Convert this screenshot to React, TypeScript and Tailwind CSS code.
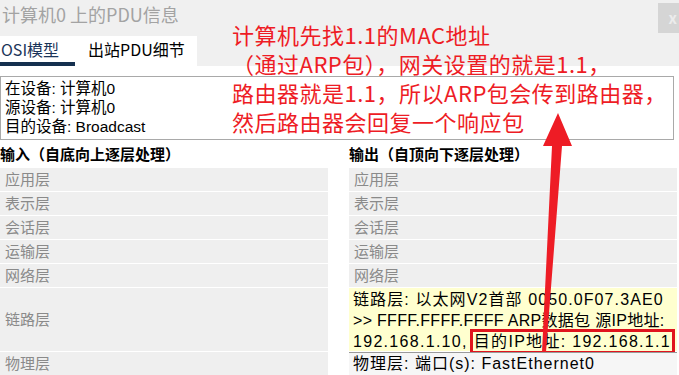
import React from 'react';

const cjk = { fontFamily: '"Noto Sans CJK SC", "Noto Sans", sans-serif' };
const mixed = { fontFamily: '"Liberation Sans", "Noto Sans CJK SC", sans-serif' };

const layers = ['应用层', '表示层', '会话层', '运输层', '网络层'];

const LayerRow: React.FC<{ label: string; tall?: boolean }> = ({ label, tall }) => (
  <div
    className={`flex items-center bg-[#efefef] pl-[5px] text-[15px] text-[#8a8a8a] ${tall ? 'h-[63px]' : 'h-[23px]'}`}
  >
    {label}
  </div>
);

const App: React.FC = () => {
  return (
    <div className="relative w-[679px] h-[375px] overflow-hidden bg-[#f0f0f0] flex flex-col" style={cjk}>
      {/* title bar */}
      <div className="h-[36px] flex justify-between items-start shrink-0">
        <div className="pl-[2px] pt-[2px] text-[18px] leading-[25px] text-[#a3a3a3]">计算机0 上的PDU信息</div>
        <div className="mt-[3px] w-[21px] h-[30px] bg-[#d5d5d5] flex items-center justify-end pr-[2px] text-[15px] font-bold text-[#ececec]">x</div>
      </div>

      {/* tabs */}
      <div className="h-[30px] flex shrink-0">
        <div className="w-[197px] bg-white flex items-end">
          <div className="w-[75px] h-full flex flex-col justify-between">
            <span className="pl-[1px] pt-[3px] text-[16px] leading-[21px] text-[#1b355a]">OSI模型</span>
            <div className="h-[4px] bg-[#15304f]" />
          </div>
          <span className="ml-[13px] self-start pt-[3px] text-[16px] leading-[21px] text-black">出站PDU细节</span>
        </div>
      </div>

      {/* content */}
      <div className="flex-1 bg-white flex flex-col">
        <div
          className="mt-[10px] mr-[5px] h-[64px] border border-[#a9a9a9] pl-[4px] pt-[2px] text-[15.5px] leading-[19px] text-black"
          style={mixed}
        >
          <div>在设备: 计算机0</div>
          <div>源设备: 计算机0</div>
          <div>目的设备: Broadcast</div>
        </div>

        <div className="mt-[1px] grid grid-cols-[328px_328px] gap-x-[21px]">
          <div className="flex flex-col gap-[1px]">
            <div className="h-[26px] flex items-center text-[15px] font-bold text-black">输入（自底向上逐层处理）</div>
            {layers.map((l) => (
              <LayerRow key={l} label={l} />
            ))}
            <LayerRow label="链路层" tall />
            <LayerRow label="物理层" />
          </div>

          <div className="flex flex-col gap-[1px]">
            <div className="h-[26px] flex items-center text-[15px] font-bold text-black">输出（自顶向下逐层处理）</div>
            {layers.map((l) => (
              <LayerRow key={l} label={l} />
            ))}
            <div
              className="h-[63px] bg-[#ffffcf] pl-[4px] pt-[1px] text-[16px] leading-[21px] text-black whitespace-nowrap"
              style={mixed}
            >
              <div className="tracking-[1.1px]">链路层: 以太网V2首部 0050.0F07.3AE0</div>
              <div className="tracking-[0.3px]">&gt;&gt; FFFF.FFFF.FFFF ARP数据包 源IP地址:</div>
              <div className="tracking-[1.3px]">
                192.168.1.10,
                <span className="ml-[2px] px-[1px] py-[1px] border-[3px] border-[#e0141e]">目的IP地址: 192.168.1.1</span>
              </div>
            </div>
            <div
              className="h-[23px] flex items-center bg-[#f6f6f6] border-t border-[#9a9a9a] pl-[4px] text-[16px] text-black tracking-[1px]"
              style={mixed}
            >
              物理层: 端口(s): FastEthernet0
            </div>
          </div>
        </div>
      </div>

      {/* annotation */}
      <div className="absolute left-[232px] top-[20px] text-[22px] leading-[29px] tracking-[0.5px] text-[#ee1c25] whitespace-nowrap">
        <div>计算机先找1.1的MAC地址</div>
        <div>（通过ARP包），网关设置的就是1.1，</div>
        <div>路由器就是1.1，所以ARP包会传到路由器，</div>
        <div>然后路由器会回复一个响应包</div>
      </div>

      {/* arrow */}
      <svg className="absolute left-0 top-0" width="679" height="375" viewBox="0 0 679 375">
        <polygon points="558,113 572,146 562,146 546,352 542,352 552,146 543,146" fill="#ee1c25" />
      </svg>
    </div>
  );
};

export default App;
